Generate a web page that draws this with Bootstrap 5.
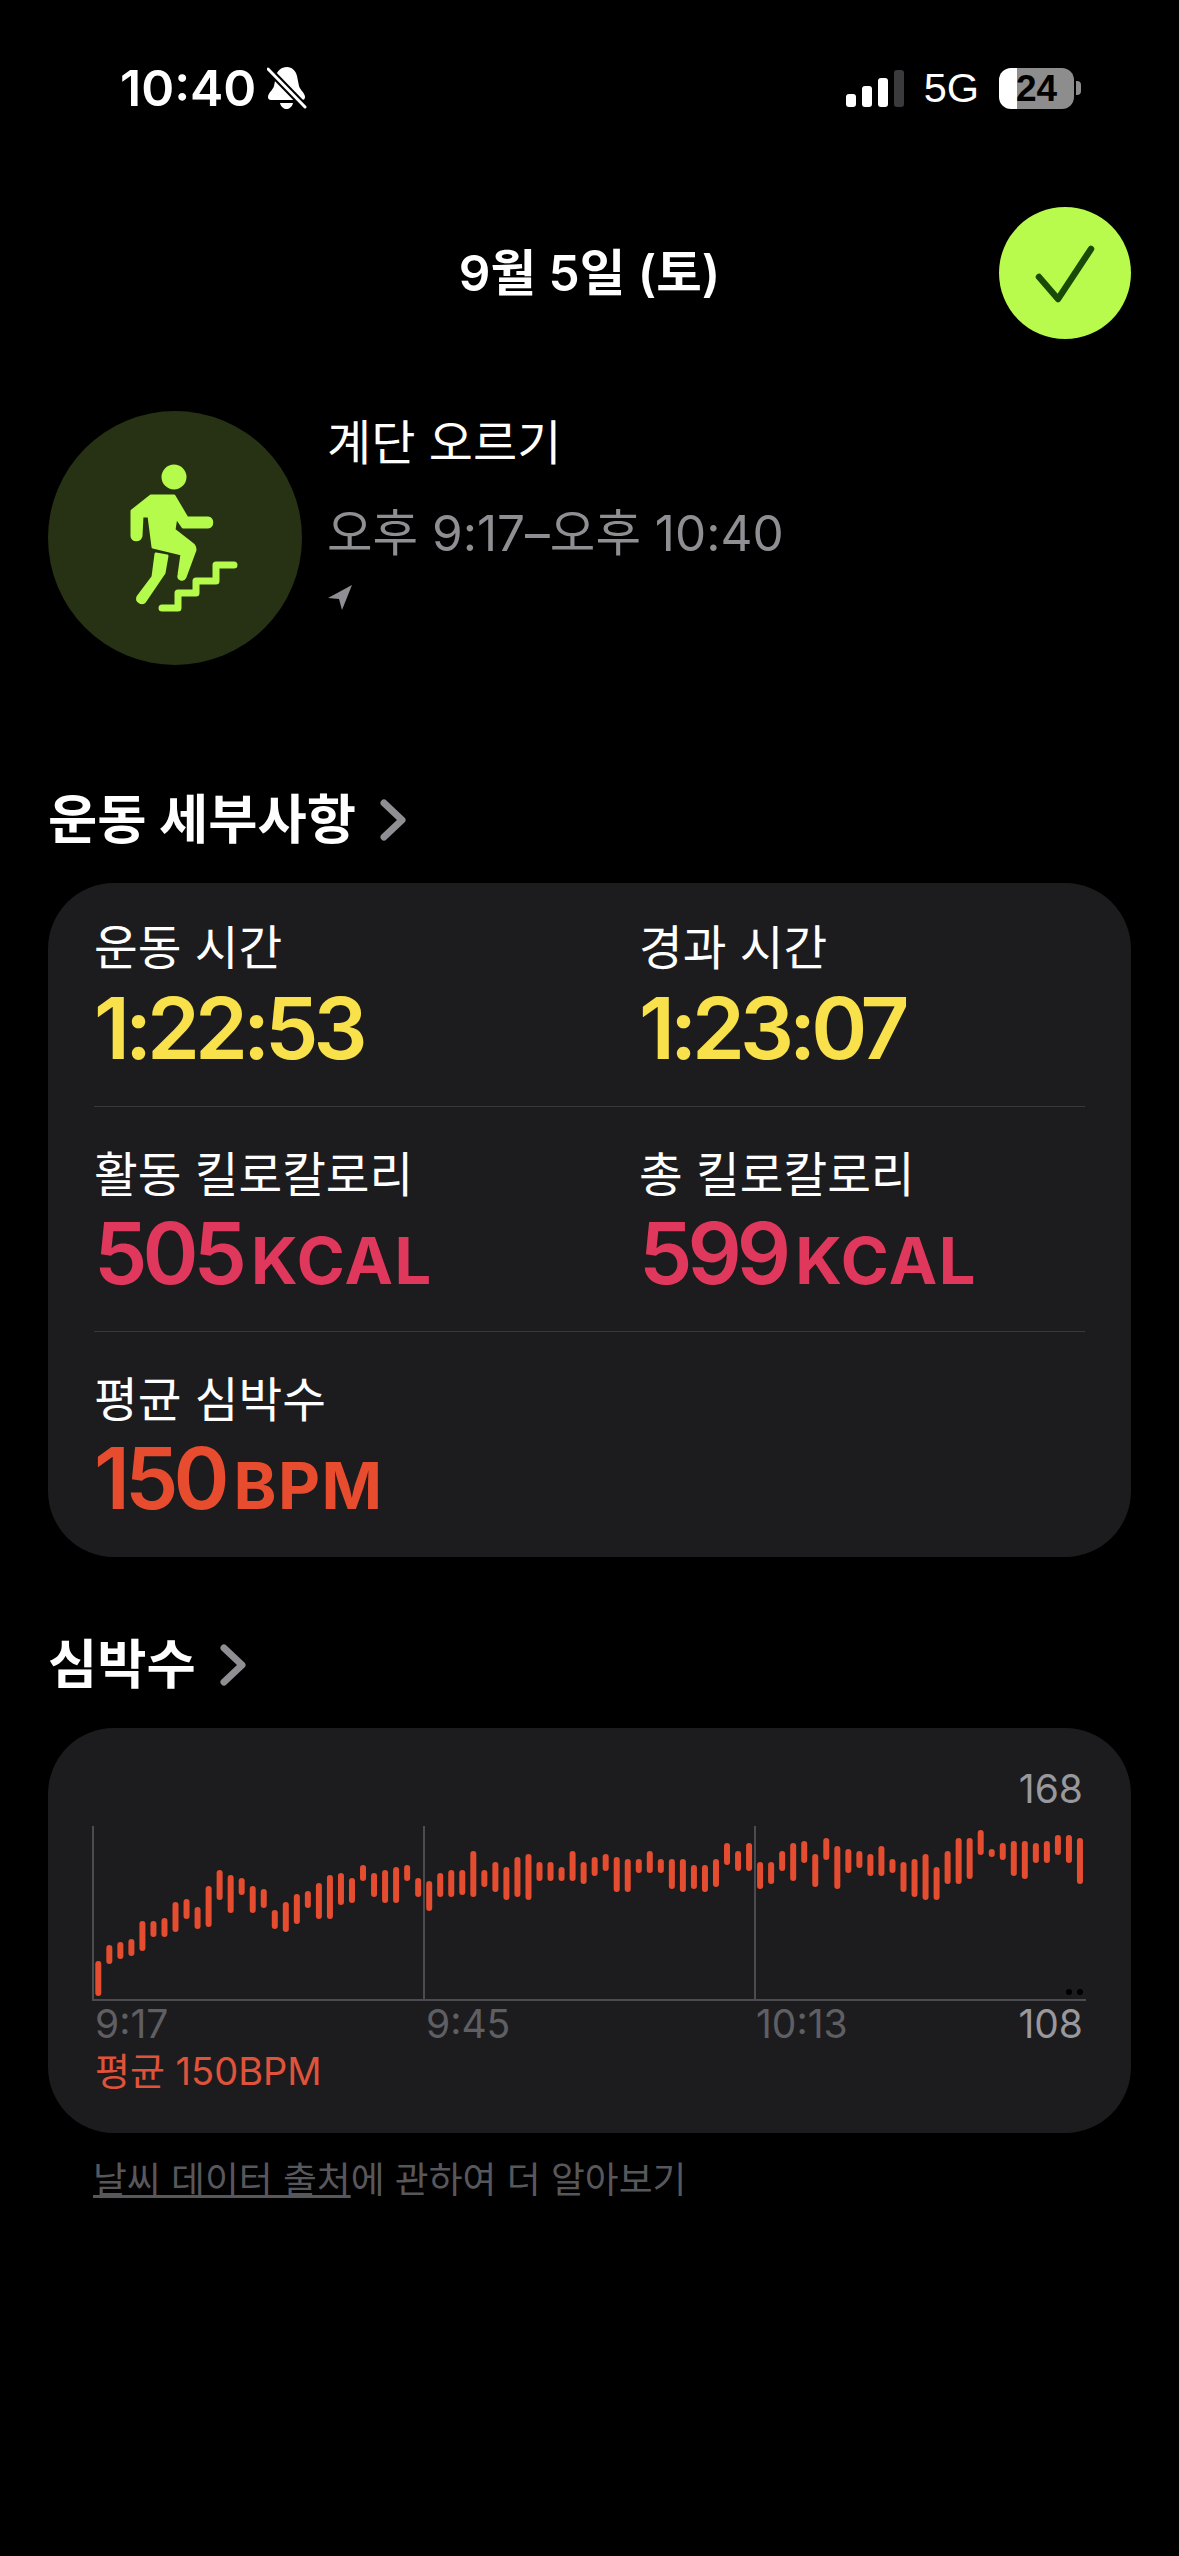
<!DOCTYPE html>
<html lang="ko">
<head>
  <meta charset="UTF-8">
  <meta name="viewport" content="width=device-width, initial-scale=1.0">
  <title>계단 오르기</title>
  <link href="https://cdn.jsdelivr.net/npm/bootstrap@5.3.0/dist/css/bootstrap.min.css" rel="stylesheet">
  <style>
    html, body { background: #000; }
    body {
      width: 1179px;
      height: 2556px;
      overflow: hidden;
      color: #fff;
      font-family: Inter, "Noto Sans CJK KR", sans-serif;
    }
    /* status bar */
    .status-row { height: 176px; padding: 0 98px 0 120px; }
    .clock-wrap { gap: 11px; }
    .clock { font-size: 50px; font-weight: 600; line-height: 1; }
    .signal-bars { margin-right: 20px; }
    .net-label { font-size: 41.5px; line-height: 1; margin-right: 20px; font-family: "Liberation Sans", sans-serif; }
    .batt { width: 75px; height: 41px; border-radius: 12px; background: linear-gradient(90deg, #fff 24%, #8d8d8d 24%); color: #000; font-size: 37px; font-weight: 700; line-height: 41px; text-align: center; font-family: "Liberation Sans", sans-serif; }
    .batt-tip { width: 5px; height: 14px; margin-left: 2px; border-radius: 0 4px 4px 0; background: #8d8d8d; }

    /* page header */
    .head-row { margin-top: 31px; padding: 0 48px; }
    .side-slot { width: 132px; height: 132px; flex: none; }
    .done-btn { border-radius: 50%; background: #b8fb4c; }
    .day-title { font-size: 49.5px; font-weight: 600; }

    /* workout summary */
    .activity-row { margin-top: 72px; padding: 0 48px; gap: 25px; }
    .activity-icon { width: 254px; height: 254px; flex: none; border-radius: 50%; background: #263213; }
    .activity-name { font-size: 48px; line-height: 60px; margin-top: 2px; }
    .activity-time { font-size: 49.5px; line-height: 60px; margin-top: 30px; color: #8e8e93; }
    .activity-place { display: block; margin-top: 22px; }

    .section-head { margin: 125px 0 0; padding-left: 48px; height: 60px; font-size: 53.5px; font-weight: 700; line-height: 60px; gap: 24px; }
    .section-head-heart { margin-top: 78px; }
    .stat-panel { margin: 33px 48px 0; background: #1c1c1e; border: 0; border-radius: 66px; }
    .stat-row { margin: 0 46px; padding: 40px 0 21px; }
    .stat-row + .stat-row { border-top: 1px solid #38383a; padding-top: 43px; }
    .stat-row + .stat-row .stat-value { margin-top: -2px; }
    .stat-row:last-child { padding-bottom: 22px; }
    .stat-cell { flex: 0 0 545px; }
    .stat-label { font-size: 47.5px; line-height: 50px; }
    .stat-value { font-size: 85px; font-weight: 600; line-height: 112px; letter-spacing: -5px; white-space: nowrap; }
    .stat-unit { font-size: 65px; font-weight: 700; line-height: 1; letter-spacing: 1.5px; margin-left: 9px; }
    .tone-time { color: #f9e14b; }
    .tone-cal { color: #e0385c; }
    .tone-heart { color: #e84c2e; }

    /* heart rate chart */
    .chart-panel { height: 405px; }
    .chart-svg { display: block; }
    .axis-text { font-size: 39px; fill: #5f5f63; }
    .axis-text-range { fill: #98989d; }
    .avg-line { padding-left: 47px; font-size: 38px; line-height: 44px; margin-top: -2px; color: #e0533a; }
    .source-line { margin: 25px 0 0 93px; font-size: 36.8px; line-height: 44px; color: #58585c; }
    .source-line a { color: inherit; text-decoration-thickness: 3px; }
  </style>
</head>
<body>

<div class="status-row d-flex align-items-center justify-content-between">
  <div class="clock-wrap d-flex align-items-center">
    <span class="clock">10:40</span>
    <svg width="40" height="44" viewBox="0 0 40 44">
      <path d="M20 1c5 0 9 4 10 9l2 10c1 4 6 7 6 11 0 2-1 3-3 3H4c-2 0-3-1-3-3 0-4 5-7 6-11l2-10c1-5 5-9 11-9z" fill="#fff"/>
      <path d="M13 37h13c-1 4-4 6-6.500 6S14 41 13 37z" fill="#fff"/>
      <path d="M1 3l37 38" stroke="#000" stroke-width="7"/>
      <path d="M1 3l37 38" stroke="#fff" stroke-width="3" stroke-linecap="round"/>
    </svg>
  </div>
  <div class="d-flex align-items-center">
    <svg class="signal-bars" width="58" height="37" viewBox="0 0 58 37">
      <rect x="0" y="24" width="10" height="13" rx="3" fill="#fff"/>
      <rect x="16" y="16" width="10" height="21" rx="3" fill="#fff"/>
      <rect x="32" y="8" width="10" height="29" rx="3" fill="#fff"/>
      <rect x="48" y="0" width="10" height="37" rx="3" fill="#3a3a3c"/>
    </svg>
    <span class="net-label">5G</span>
    <div class="batt">24</div>
    <div class="batt-tip"></div>
  </div>
</div>

<div class="head-row d-flex align-items-center justify-content-between">
  <div class="side-slot"></div>
  <div class="day-title">9월 5일 (토)</div>
  <button type="button" class="side-slot done-btn btn p-0 border-0 d-flex align-items-center justify-content-center">
    <svg width="132" height="132" viewBox="0 0 132 132">
      <path d="M40 70l19 22 33-50" fill="none" stroke="#1b4a08" stroke-width="6.500" stroke-linecap="round" stroke-linejoin="round"/>
    </svg>
  </button>
</div>

<div class="activity-row d-flex">
  <div class="activity-icon">
    <!-- stair climber figure, drawn in page-sized units -->
    <svg width="254" height="254" viewBox="48 411 254 254">
      <g fill="#b4fb4c" stroke="#b4fb4c" stroke-width="3" stroke-linejoin="round">
        <circle cx="174" cy="477" r="11"/>
        <path d="M151 496H174L187 518H208C213 518 213 527 208 527H183L176 517 174 530 192 544C195 546 195 548 195 550L185 577C183 581 178 579 179 575L182 554 153 547 149 516 142 516 141 536C140 541 132 541 132 536L132 511z"/>
        <path d="M156 554 167 556 164 573 145 601C142 605 136 601 138 597L153 577z"/>
      </g>
      <path d="M162 608h16v-15h18v-12h20v-16h18" fill="none" stroke="#b4fb4c" stroke-width="7" stroke-linecap="round" stroke-linejoin="round"/>
    </svg>
  </div>
  <div>
    <div class="activity-name">계단 오르기</div>
    <div class="activity-time">오후 9:17–오후 10:40</div>
    <svg class="activity-place" width="26" height="25" viewBox="0 0 26 25"><path d="M25 0L1 13l11 1 3 11z" fill="#8e8e93"/></svg>
  </div>
</div>

<h2 class="section-head d-flex align-items-center">운동 세부사항
  <svg width="26" height="42" viewBox="0 0 26 42"><path d="M4 4l18 17L4 38" fill="none" stroke="#8e8e93" stroke-width="7" stroke-linecap="round" stroke-linejoin="round"/></svg>
</h2>

<div class="stat-panel card">
  <div class="stat-row row g-0">
    <div class="stat-cell">
      <div class="stat-label">운동 시간</div>
      <div class="stat-value tone-time">1:22:53</div>
    </div>
    <div class="col">
      <div class="stat-label">경과 시간</div>
      <div class="stat-value tone-time">1:23:07</div>
    </div>
  </div>
  <div class="stat-row row g-0">
    <div class="stat-cell">
      <div class="stat-label">활동 킬로칼로리</div>
      <div class="stat-value tone-cal">505<span class="stat-unit">KCAL</span></div>
    </div>
    <div class="col">
      <div class="stat-label">총 킬로칼로리</div>
      <div class="stat-value tone-cal">599<span class="stat-unit">KCAL</span></div>
    </div>
  </div>
  <div class="stat-row row g-0">
    <div class="stat-cell">
      <div class="stat-label">평균 심박수</div>
      <div class="stat-value tone-heart">150<span class="stat-unit">BPM</span></div>
    </div>
  </div>
</div>

<h2 class="section-head section-head-heart d-flex align-items-center">심박수
  <svg width="26" height="42" viewBox="0 0 26 42"><path d="M4 4l18 17L4 38" fill="none" stroke="#8e8e93" stroke-width="7" stroke-linecap="round" stroke-linejoin="round"/></svg>
</h2>

<div class="stat-panel chart-panel card">
  <svg id="hrChart" class="chart-svg" width="1083" height="323" viewBox="48 1728 1083 323">
    <g stroke="#4c4c50" stroke-width="2">
      <path d="M93 1826V2000M424 1826V2000M755 1826V2000M92 2000H1086"/>
    </g>
    <text class="axis-text axis-text-range" x="1083" y="1803" text-anchor="end">168</text>
    <text class="axis-text" x="95" y="2038">9:17</text>
    <text class="axis-text" x="426" y="2038">9:45</text>
    <text class="axis-text" x="756" y="2038">10:13</text>
    <text class="axis-text axis-text-range" x="1083" y="2038" text-anchor="end">108</text>
    <circle cx="1069" cy="1992" r="3" fill="#000"/>
    <circle cx="1080" cy="1992" r="3" fill="#000"/>
  </svg>
  <div class="avg-line">평균 150BPM</div>
</div>

<p class="source-line"><a href="#">날씨 데이터 출처</a>에 관하여 더 알아보기</p>

<script src="https://cdn.jsdelivr.net/npm/bootstrap@5.3.0/dist/js/bootstrap.bundle.min.js"></script>
<script>
  // heart rate ranges per sample, in chart pixels below y=1760 (top, bottom)
  const ranges = [
    [201,236],[185,204],[182,199],[179,196],[161,191],[161,177],[158,177],[142,172],[139,159],[147,169],
    [126,167],[110,140],[115,153],[118,135],[126,153],[129,148],[150,169],[142,172],[134,164],[131,148],
    [123,159],[115,159],[113,145],[118,143],[105,121],[113,137],[110,143],[107,143],[105,121],[118,137],
    [121,151],[113,137],[110,137],[110,135],[91,137],[110,127],[102,132],[107,140],[97,137],[94,140],
    [102,121],[102,121],[107,121],[91,121],[102,124],[97,116],[94,111],[97,132],[99,132],[99,113],
    [91,113],[99,113],[99,129],[99,132],[105,129],[105,132],[99,127],[83,105],[91,111],[83,111],
    [102,129],[102,124],[91,111],[83,121],[81,103],[94,127],[78,100],[86,129],[89,113],[91,108],
    [94,116],[86,116],[99,113],[102,132],[99,137],[94,140],[107,140],[91,124],[78,124],[78,119],
    [70,95],[89,97],[83,100],[81,116],[81,119],[83,103],[81,103],[75,95],[75,103],[78,124]
  ];
  const chart = document.getElementById('hrChart');
  ranges.forEach(function(r, i) {
    const bar = document.createElementNS('http://www.w3.org/2000/svg', 'rect');
    bar.setAttribute('x', 95.3 + i * 11.03);
    bar.setAttribute('y', 1760 + r[0]);
    bar.setAttribute('width', 6);
    bar.setAttribute('height', r[1] - r[0]);
    bar.setAttribute('rx', 3);
    bar.setAttribute('fill', '#e54d30');
    chart.appendChild(bar);
  });
</script>
</body>
</html>
